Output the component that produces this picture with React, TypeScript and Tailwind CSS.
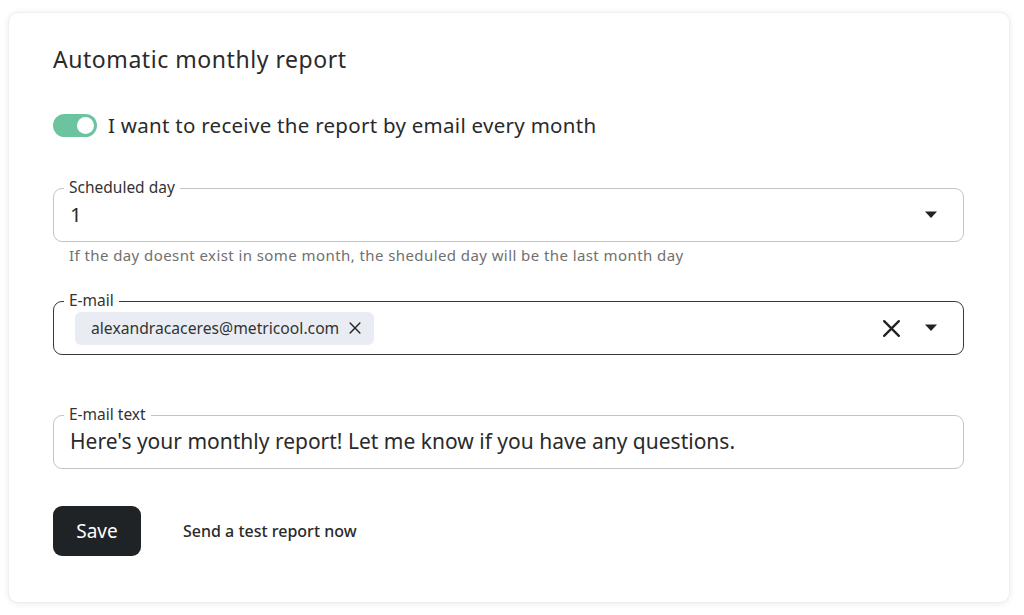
import React from "react";

function Caret() {
  return (
    <svg width="14" height="8" viewBox="0 0 14 8" className="shrink-0">
      <path d="M1 0.5 L13 0.5 L7 7 Z" fill="#222" />
    </svg>
  );
}

function XIcon({ size, stroke }: { size: number; stroke: number }) {
  return (
    <svg width={size} height={size} viewBox="0 0 20 20" className="shrink-0">
      <path d="M3 3 L17 17 M17 3 L3 17" stroke="#222" strokeWidth={stroke} strokeLinecap="round" />
    </svg>
  );
}

export default function App() {
  return (
    <div
      className="w-[1024px] h-[615px] bg-white pt-[12px] pl-[8px]"
      style={{ fontFamily: '"Noto Sans", "Open Sans", sans-serif' }}
    >
      <div className="w-[1002px] h-[591px] rounded-[10px] bg-white border border-[#efefef] shadow-[0_1px_6px_rgba(0,0,0,0.08)] pl-[44px] pr-[45px] pt-[31px]">
        <h1 className="text-[23px] tracking-[0.55px] leading-[30px] text-[#2a2a2a] font-normal">Automatic monthly report</h1>

        <div className="flex items-center gap-[11px] mt-[37px]">
          <div className="w-[44px] h-[23px] rounded-full bg-[#6cc49f] flex items-center justify-end pr-[3px]">
            <div className="w-[17px] h-[17px] rounded-full bg-white" />
          </div>
          <span className="text-[20.5px] tracking-[0.28px] leading-[28px] text-[#2a2a2a]">I want to receive the report by email every month</span>
        </div>

        {/* Scheduled day */}
        <div className="relative mt-[49px] h-[54px] rounded-[9px] border border-[#c4c4c4] flex items-center pl-[16px] pr-[25px]">
          <span className="absolute -top-[12px] left-[10px] bg-white px-[5px] text-[15.5px] leading-[20px] text-[#333]">Scheduled day</span>
          <span className="flex-1 text-[20.5px] leading-[28px] text-[#2a2a2a] pb-[2px]">1</span>
          <Caret />
        </div>
        <div className="pl-[16px] mt-[3px] text-[15px] tracking-[0.42px] leading-[20px] text-[#707070]">
          If the day doesnt exist in some month, the sheduled day will be the last month day
        </div>

        {/* Email */}
        <div className="relative mt-[36px] h-[54px] rounded-[9px] border border-[#3a3a3a] flex items-center pl-[21px] pr-[25px]">
          <span className="absolute -top-[12px] left-[10px] bg-white px-[5px] text-[15.5px] leading-[20px] text-[#333]">E-mail</span>
          <div className="flex-1 flex">
            <div className="h-[33px] rounded-[6px] bg-[#e9edf3] flex items-center pl-[16px] pr-[12px] gap-[9px]">
              <span className="text-[15.7px] leading-[22px] text-[#333]">alexandracaceres@metricool.com</span>
              <XIcon size={14} stroke={2} />
            </div>
          </div>
          <div className="mr-[22px] flex items-center">
            <XIcon size={21} stroke={2.2} />
          </div>
          <Caret />
        </div>

        {/* Email text */}
        <div className="relative mt-[60px] h-[54px] rounded-[9px] border border-[#c4c4c4] flex items-center pl-[16px] pr-[25px]">
          <span className="absolute -top-[12px] left-[10px] bg-white px-[5px] text-[15.5px] leading-[20px] text-[#333]">E-mail text</span>
          <span className="flex-1 text-[21px] leading-[28px] text-[#2a2a2a] pb-[2px]">
            Here's your monthly report! Let me know if you have any questions.
          </span>
        </div>

        <div className="flex items-center mt-[37px]">
          <button className="w-[88px] h-[50px] rounded-[9px] bg-[#1f2326] text-white text-[19px] leading-[26px]">Save</button>
          <span className="ml-[42px] text-[16px] leading-[22px] text-[#2a2a2a] font-medium">Send a test report now</span>
        </div>
      </div>
    </div>
  );
}
